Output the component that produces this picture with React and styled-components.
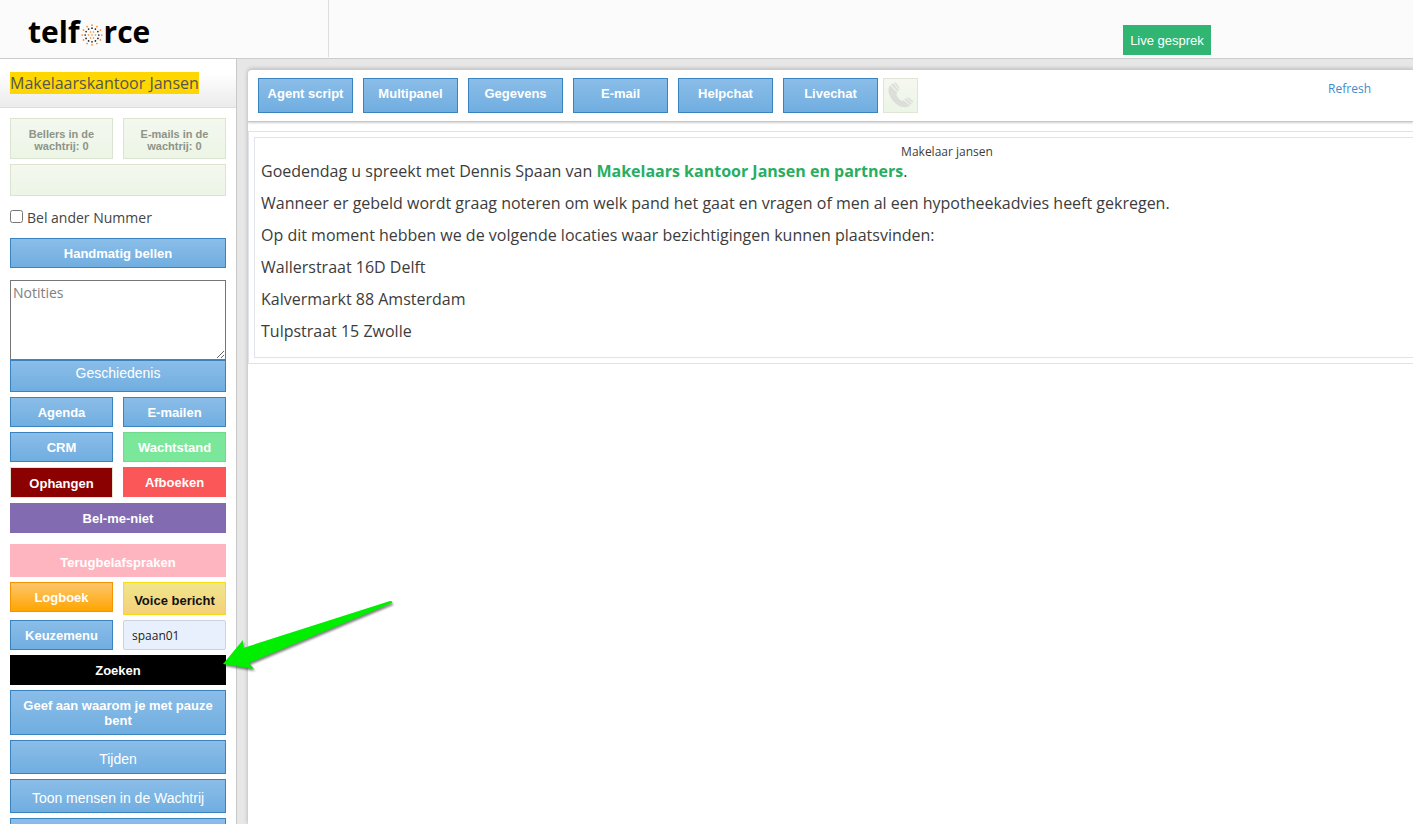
import React from "react";
import styled, { createGlobalStyle, css } from "styled-components";

const Global = createGlobalStyle`
  *, *::before, *::after { box-sizing: border-box; }
  body { margin: 0; font-family: "Open Sans", sans-serif; color: #444; background: #fff; }
`;

const Page = styled.div`
  display: flex;
  flex-direction: column;
  height: 100vh;
  overflow: hidden;
`;

const Header = styled.header`
  display: flex;
  flex: none;
  height: 59px;
  background: #fbfbfb;
  border-bottom: 1px solid #ccc;
`;

const Brand = styled.div`
  display: flex;
  align-items: center;
  flex: none;
  width: 329px;
  height: 57px;
  padding: 6px 0 0 28px;
  border-right: 1px solid #ddd;
`;

const BrandText = styled.span`
  font-size: 30px;
  line-height: 40px;
  font-weight: 700;
  color: #000;
`;

const BrandMark = styled.svg`
  flex: none;
  width: 24px;
  height: 22px;
  margin-top: 6px;
`;

const LiveButton = styled.button`
  width: 88px;
  height: 30px;
  margin: 25px 202px 0 auto;
  padding: 0;
  border: 0;
  background: #30b573;
  color: #fff;
  font: 13px "Liberation Sans", sans-serif;
`;

const Body = styled.div`
  display: flex;
  flex: 1;
  min-height: 0;
`;

const Sidebar = styled.aside`
  position: relative;
  z-index: 1;
  flex: none;
  width: 237px;
  border-right: 1px solid #c8c8c8;
  background: #fff;
`;

const Client = styled.div`
  height: 49px;
  padding: 12px 10px 0;
  border-bottom: 1px solid #ddd;
  background: linear-gradient(#fff 30%, #ebebeb);
  font-size: 16px;
  line-height: 24px;

  mark {
    display: inline-block;
    height: 22px;
    line-height: 22px;
    background: #ffd700;
    color: #555;
    white-space: nowrap;
  }
`;

const Stack = styled.div`
  display: flex;
  flex-direction: column;
  gap: 5px;
  padding: 10px;
`;

const Pair = styled.div`
  display: grid;
  grid-template-columns: 1fr 1fr;
  column-gap: 10px;
  align-items: start;
`;

const tones = {
  blue: css`background: linear-gradient(#8bbde8, #70aee0); border-color: #3883c0; color: #fff;`,
  green: css`background: #7ae79a; border-color: #6fd98e; color: #fff;`,
  darkred: css`background: #8b0000; border-color: #dfe3cf; color: #fff;`,
  red: css`background: #fb5759; border-color: #fb5759; color: #fff;`,
  purple: css`background: #826bb1; border-color: #826bb1; color: #fff;`,
  pink: css`background: #ffb5c0; border-color: #ffb5c0; color: #fff;`,
  orange: css`background: linear-gradient(#fdc66d, #ffa500); border-color: #f59300; color: #fff;`,
  yellow: css`background: linear-gradient(#f0e68c, #f5d07a); border-color: #f4dc18; color: #111;`,
  black: css`background: #000; border-color: #000; color: #fff;`,
};

const Button = styled.button`
  width: 100%;
  height: ${(p) => p.$height || 30}px;
  padding: ${(p) => p.$pad || "0 8px"};
  border: 1px solid;
  ${(p) => tones[p.$tone || "blue"]}
  font-family: "Liberation Sans", sans-serif;
  font-size: ${(p) => (p.$plain ? 14 : 13)}px;
  font-weight: ${(p) => (p.$plain ? 400 : 700)};
  line-height: 15px;
`;

const Counter = styled.div`
  display: flex;
  align-items: center;
  justify-content: center;
  height: ${(p) => (p.$bar ? 32 : 41)}px;
  padding: 3px 12px 0;
  border: 1px solid #dbe4d0;
  background: linear-gradient(#f4f8ef, #ecf5e6);
  color: #8d9488;
  font: 700 11px/12px "Liberation Sans", sans-serif;
  text-align: center;
`;

const Check = styled.label`
  display: flex;
  align-items: center;
  gap: 4px;
  height: 22px;
  margin: 5px 0;
  font-size: 14px;

  input { width: 13px; height: 13px; margin: 0 0 2px; }
`;

const Notes = styled.textarea`
  display: block;
  width: 100%;
  height: 80px;
  padding: 2px;
  border: 1px solid #767676;
  border-radius: 0;
  font: 14px/19px "Open Sans", sans-serif;
  resize: vertical;

  &::placeholder { color: #808080; }
`;

const History = styled.div`
  display: flex;
  flex-direction: column;
  margin-top: 7px;
`;

const Agent = styled.input`
  width: 100%;
  height: 30px;
  padding: 0 8px;
  border: 1px solid #ccd3df;
  border-radius: 2px;
  background: #e8f0fe;
  color: #222;
  font: 12px "Open Sans", sans-serif;
`;

const Spaced = styled.div`
  display: grid;
  margin-top: 6px;
`;

const Pointed = styled.div`
  position: relative;
`;

const Arrow = styled.svg`
  position: absolute;
  left: 210px;
  top: -57px;
  width: 180px;
  height: 80px;
  pointer-events: none;
  filter: drop-shadow(1px 2px 1px rgba(0, 0, 0, 0.5));
`;

const Main = styled.main`
  flex: 1;
  min-width: 0;
  padding: 10px 0 0 11px;
  background: #e7e7e7;
`;

const Panel = styled.section`
  height: 100%;
  border-top: 1px solid #ccc;
  border-radius: 4px 0 0 0;
  background: #fff;
  box-shadow: 0 0 4px rgba(0, 0, 0, 0.25);
  overflow: hidden;
`;

const Toolbar = styled.nav`
  display: flex;
  align-items: flex-start;
  height: 52px;
  padding: 8px 42px 0 10px;
  border-bottom: 1px solid #c8c8c8;
  box-shadow: 0 1px 2px rgba(0, 0, 0, 0.2);
`;

const Tabs = styled.div`
  display: grid;
  grid-template-columns: repeat(6, 95px);
  gap: 10px;
`;

const PhoneButton = styled.button`
  display: grid;
  place-items: center;
  width: 35px;
  height: 35px;
  margin-left: 5px;
  padding: 0;
  border: 1px solid #dfe6d6;
  background: linear-gradient(#f5f8f0, #ecf5e6);
`;

const Refresh = styled.a`
  margin-left: auto;
  color: #428bca;
  font-size: 12px;
  line-height: 22px;
  text-decoration: none;
`;

const ScriptFrame = styled.div`
  width: 120%;
  margin-top: 9px;
  padding: 5px;
  border: 1px solid #e0e3ec;
`;

const Script = styled.article`
  padding: 6px 6px 5px;
  border: 1px solid #e0e3ec;
  color: #3c3c3c;

  h1 {
    margin: 0;
    font-size: 12px;
    font-weight: 400;
    line-height: 16px;
    text-align: center;
  }
  p { margin: 0 0 10px; font-size: 16px; line-height: 22px; }
  strong { color: #27ae60; }
`;

const rings = [
  { count: 12, radius: 9.8, size: 0.85, color: "#f58220" },
  { count: 12, radius: 6.8, size: 0.85, color: "#222" },
];
const core = [
  [9.5, 8], [12.5, 8], [7.5, 11], [11, 11], [14.5, 11], [9.5, 14], [12.5, 14],
];

function Sunburst() {
  return (
    <BrandMark viewBox="0 0 22 22" aria-hidden="true">
      {rings.map((ring) =>
        Array.from({ length: ring.count }, (_, i) => {
          const a = (i * 2 * Math.PI) / ring.count;
          return (
            <circle
              key={ring.radius + "-" + i}
              cx={11 + ring.radius * Math.sin(a)}
              cy={11 - ring.radius * Math.cos(a)}
              r={ring.size}
              fill={ring.color}
            />
          );
        })
      )}
      {core.map(([x, y]) => (
        <circle key={x + "," + y} cx={x} cy={y} r="0.8" fill="#f58220" />
      ))}
    </BrandMark>
  );
}

const tabs = ["Agent script", "Multipanel", "Gegevens", "E-mail", "Helpchat", "Livechat"];
const lines = [
  "Wanneer er gebeld wordt graag noteren om welk pand het gaat en vragen of men al een hypotheekadvies heeft gekregen.",
  "Op dit moment hebben we de volgende locaties waar bezichtigingen kunnen plaatsvinden:",
  "Wallerstraat 16D Delft",
  "Kalvermarkt 88 Amsterdam",
  "Tulpstraat 15 Zwolle",
];

export default function App() {
  return (
    <Page>
      <Global />
      <Header>
        <Brand>
          <BrandText>telf</BrandText>
          <Sunburst />
          <BrandText>rce</BrandText>
        </Brand>
        <LiveButton>Live gesprek</LiveButton>
      </Header>
      <Body>
        <Sidebar>
          <Client><mark>Makelaarskantoor Jansen</mark></Client>
          <Stack>
            <Pair>
              <Counter>Bellers in de wachtrij: 0</Counter>
              <Counter>E-mails in de wachtrij: 0</Counter>
            </Pair>
            <Counter $bar />
            <Check><input type="checkbox" />Bel ander Nummer</Check>
            <Button>Handmatig bellen</Button>
            <History>
              <Notes placeholder="Notities" aria-label="Notities" />
              <Button $plain $height={32} $pad="0 8px 6px">Geschiedenis</Button>
            </History>
            <Pair>
              <Button>Agenda</Button>
              <Button>E-mailen</Button>
            </Pair>
            <Pair>
              <Button>CRM</Button>
              <Button $tone="green">Wachtstand</Button>
            </Pair>
            <Pair>
              <Button $tone="darkred" $height={31} $pad="2px 8px 0">Ophangen</Button>
              <Button $tone="red">Afboeken</Button>
            </Pair>
            <Button $tone="purple">Bel-me-niet</Button>
            <Spaced>
              <Button $tone="pink" $height={33} $pad="3px 8px 0">Terugbelafspraken</Button>
            </Spaced>
            <Pair>
              <Button $tone="orange">Logboek</Button>
              <Button $tone="yellow" $height={33} $pad="3px 0 0">Voice bericht</Button>
            </Pair>
            <Pair>
              <Button>Keuzemenu</Button>
              <Agent defaultValue="spaan01" aria-label="Keuzemenu" />
            </Pair>
            <Pointed>
              <Button $tone="black">Zoeken</Button>
              <Arrow viewBox="0 0 180 80" aria-hidden="true">
                <path d="M3 66 L23 42 L23 50 L170 3 Q173 3 172 5 L29 65 L34 71 Z" fill="#00ef00" />
              </Arrow>
            </Pointed>
            <Button $height={45}>Geef aan waarom je met pauze bent</Button>
            <Button $plain $height={34} $pad="5px 8px 0">Tijden</Button>
            <Button $plain $height={34} $pad="5px 8px 0">Toon mensen in de Wachtrij</Button>
            <Button $plain $height={34} aria-label="Meer" />
          </Stack>
        </Sidebar>
        <Main>
          <Panel>
            <Toolbar>
              <Tabs>
                {tabs.map((t) => (
                  <Button key={t} $height={35} $pad="0 0 4px">{t}</Button>
                ))}
              </Tabs>
              <PhoneButton aria-label="Bellen">
                <svg width="27" height="27" viewBox="0 0 27 27" aria-hidden="true">
                  <g fill="#dcdfd9">
                    <path d="M3.2 3.2 C0.6 6 1 11.5 4 16 C7.5 21.5 12 25 17 25.2 C19.5 25.3 21.5 25 23 23.6 L16.5 18.2 C15 19.3 13.6 18.6 11.8 16.5 C9.6 14 8.6 12.2 10.2 10.4 Z" />
                    <path d="M4 2.6 L6.2 1.2 L12 8.6 L10.8 9.8 Z" />
                    <path d="M7 0.8 Q8.6 0.2 9.6 1.6 L12.2 5.4 Q12.8 7 12.2 7.6 Z" />
                    <path d="M17.2 17.6 L18.6 16.4 L25 21.4 L23.7 23 Z" />
                    <path d="M19.2 15.8 Q20.6 15 22 16 L25.4 18.6 Q26.4 19.6 25.6 20.8 Z" />
                  </g>
                </svg>
              </PhoneButton>
              <Refresh href="#refresh">Refresh</Refresh>
            </Toolbar>
            <ScriptFrame>
              <Script>
                <h1>Makelaar jansen</h1>
                <p>
                  Goedendag u spreekt met Dennis Spaan van{" "}
                  <strong>Makelaars kantoor Jansen en partners</strong>.
                </p>
                {lines.map((l) => (
                  <p key={l}>{l}</p>
                ))}
              </Script>
            </ScriptFrame>
          </Panel>
        </Main>
      </Body>
    </Page>
  );
}
